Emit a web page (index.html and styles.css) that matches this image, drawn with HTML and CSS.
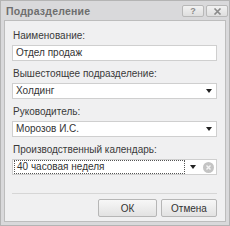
FILE: index.html
```html
<!DOCTYPE html>
<html>
<head>
<meta charset="utf-8">
<link rel="stylesheet" href="styles.css">
</head>
<body>
<div class="window">
  <div class="titlebar">
    <span class="title">Подразделение</span>
    <div class="tbuttons">
      <span class="tbtn">?</span>
      <span class="tbtn">
        <svg width="9" height="7" viewBox="0 0 9 7"><path d="M1.5 0.5 L7.5 6.5 M7.5 0.5 L1.5 6.5" stroke="#8a8a8a" stroke-width="1.6"/></svg>
      </span>
    </div>
  </div>
  <div class="panel">
    <div class="form">
      <div class="field">
        <label class="lbl">Наименование:</label>
        <div class="input"><span class="val">Отдел продаж</span></div>
      </div>
      <div class="field">
        <label class="lbl">Вышестоящее подразделение:</label>
        <div class="input"><span class="val">Холдинг</span><span class="arrow"></span></div>
      </div>
      <div class="field">
        <label class="lbl">Руководитель:</label>
        <div class="input"><span class="val">Морозов И.С.</span><span class="arrow"></span></div>
      </div>
      <div class="field">
        <label class="lbl">Производственный календарь:</label>
        <div class="input focused"><span class="val dashed">40 часовая неделя</span><span class="arrow"></span><span class="clear"><svg width="11" height="11" viewBox="0 0 11 11"><circle cx="5.5" cy="5.5" r="5.5" fill="#c4c4c4"/><path d="M3.5 3.5 L7.5 7.5 M7.5 3.5 L3.5 7.5" stroke="#f4f4f4" stroke-width="1.4"/></svg></span></div>
      </div>
    </div>
    <div class="footer">
      <button class="btn">ОК</button>
      <button class="btn">Отмена</button>
    </div>
  </div>
</div>
</body>
</html>
```
FILE: styles.css
```css
html, body { margin: 0; padding: 0; }
body { width: 230px; height: 226px; overflow: hidden; font-family: "Liberation Sans", Arial, sans-serif; }
.window {
  box-sizing: border-box;
  width: 230px; height: 226px;
  background: #d9d9db;
  border: 1px solid #b4b4b4;
  display: flex; flex-direction: column;
  padding: 0 3px 3px 3px;
}
.titlebar {
  height: 19px;
  display: flex; align-items: center; justify-content: space-between;
  padding-left: 2px;
}
.title { font-size: 10.5px; font-weight: bold; color: #6e6e6e; letter-spacing: 0.2px; }
.tbuttons { display: flex; gap: 2px; margin-right: -2px; margin-top: 1px; }
.tbtn {
  box-sizing: border-box;
  width: 22px; height: 12px;
  border: 1px solid #b8b8b8; border-radius: 2px;
  background: linear-gradient(#f2f2f2, #dedede);
  font-size: 9px; font-weight: bold; color: #8a8a8a;
  display: flex; align-items: center; justify-content: center;
  line-height: 1;
}
.panel {
  flex: 1;
  background: #f0f0f1;
  border: 1px solid #bdbdbd;
  display: flex; flex-direction: column;
  padding: 9px 8px 0 7px;
}
.form { display: flex; flex-direction: column; gap: 7px; }
.field { display: flex; flex-direction: column; gap: 3px; }
.lbl { font-size: 10px; color: #3a3a3a; padding-left: 1px; height: 12px; line-height: 12px; }
.input {
  box-sizing: border-box;
  height: 16px;
  background: #ffffff;
  border: 1px solid #cfcfcf;
  display: flex; align-items: center;
  padding: 0 2px 0 3px;
}
.val { flex: 1; font-size: 10px; color: #333; line-height: 12px; }
.arrow {
  width: 0; height: 0;
  border-left: 3.5px solid transparent; border-right: 3.5px solid transparent;
  border-top: 4px solid #222;
  margin-right: 2px;
}
.focused { padding: 0 2px 0 1px; }
.dashed { border: 1px dotted #555; padding-left: 2px; height: 12px; margin-right: 5px; }
.clear { display: flex; margin-left: 5px; }
.footer {
  margin-top: auto;
  border-top: 1px solid #d6d6d6;
  display: flex; align-items: flex-start; justify-content: flex-end; gap: 4px;
  padding: 5px 0 4px 0;
}
.btn {
  box-sizing: border-box;
  width: 59px; height: 18px;
  border: 1px solid #b6b6b6; border-radius: 2px;
  background: linear-gradient(#f7f7f7, #e2e2e2);
  font-family: "Liberation Sans", Arial, sans-serif;
  font-size: 10px; color: #333;
  padding: 0;
}
.btn + .btn { width: 56px; }
```
